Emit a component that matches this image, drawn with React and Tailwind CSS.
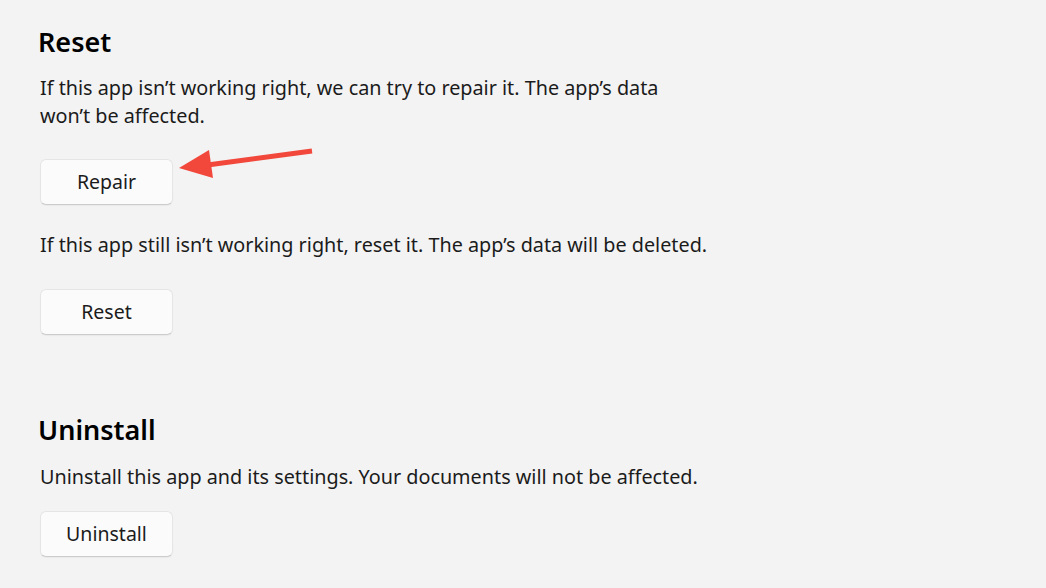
import React from 'react';

function SettingsButton({ label }) {
  return (
    <button className="w-[133px] h-[46px] rounded-[6px] bg-[#fbfbfb] border border-[#e5e5e5] border-b-[#cccccc] text-[19.5px] text-[#1b1b1b] shadow-[0_1px_1px_rgba(0,0,0,0.04)]">
      {label}
    </button>
  );
}

function Arrow() {
  return (
    <svg className="absolute left-[170px] top-[140px]" width="160" height="50" viewBox="170 140 160 50">
      <line x1="312" y1="151" x2="200" y2="166" stroke="#f2473b" strokeWidth="5" strokeLinecap="butt" />
      <polygon points="179,168 209,150 213,178" fill="#f2473b" />
    </svg>
  );
}

export default function App() {
  return (
    <div
      className="relative w-[1046px] h-[588px] bg-[#f3f3f3] text-[#1b1b1b] overflow-hidden"
      style={{ fontFamily: '"Noto Sans", "Open Sans", sans-serif' }}
    >
      <div className="pl-[38px] pt-[24px]">
        <h2 className="text-[27px] font-semibold leading-[36px] text-black">Reset</h2>
        <div className="pl-[2px]">
          <p className="mt-[14px] w-[655px] text-[19.8px] leading-[28px]">
            If this app isn’t working right, we can try to repair it. The app’s data won’t be affected.
          </p>
          <div className="mt-[29px]">
            <SettingsButton label="Repair" />
          </div>
          <p className="mt-[26px] text-[19.8px] leading-[28px]">
            If this app still isn’t working right, reset it. The app’s data will be deleted.
          </p>
          <div className="mt-[30px]">
            <SettingsButton label="Reset" />
          </div>
        </div>
        <h2 className="mt-[77px] text-[27px] font-semibold leading-[36px] text-black">Uninstall</h2>
        <div className="pl-[2px]">
          <p className="mt-[15px] text-[19.8px] leading-[28px]">
            Uninstall this app and its settings. Your documents will not be affected.
          </p>
          <div className="mt-[20px]">
            <SettingsButton label="Uninstall" />
          </div>
        </div>
      </div>
      <Arrow />
    </div>
  );
}
